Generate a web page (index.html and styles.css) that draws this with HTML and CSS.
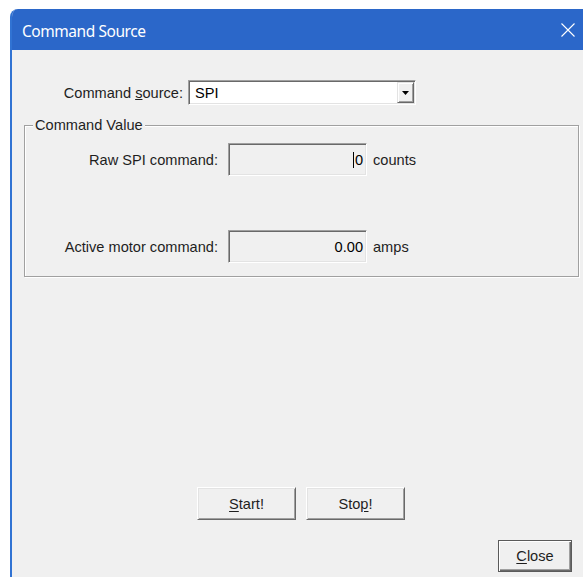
FILE: index.html
```html
<!DOCTYPE html>
<html lang="en">
<head>
<meta charset="utf-8">
<title>Command Source</title>
<link rel="stylesheet" href="styles.css">
</head>
<body>
<div class="window">
  <div class="titlebar">
    <span class="title">Command Source</span>
    <span class="close-x" aria-label="Close">
      <svg width="14" height="14" viewBox="0 0 14 14"><path d="M0.5 0.5 L13.5 13.5 M13.5 0.5 L0.5 13.5" stroke="#ffffff" stroke-width="1.1" fill="none"/></svg>
    </span>
  </div>
  <div class="client">
    <div class="source-row">
      <label class="source-label">Command <u>s</u>ource:</label>
      <div class="combo">
        <span class="combo-text">SPI</span>
        <span class="combo-btn">
          <svg width="7" height="4" viewBox="0 0 7 4"><path d="M0 0 H7 L3.5 4 Z" fill="#000000"/></svg>
        </span>
      </div>
    </div>

    <div class="group">
      <div class="caption">Command Value</div>
      <div class="value-row raw">
        <span class="value-label">Raw SPI command:</span>
        <div class="readout"><span class="caret"></span>0</div>
        <span class="unit">counts</span>
      </div>
      <div class="value-row active">
        <span class="value-label">Active motor command:</span>
        <div class="readout">0.00</div>
        <span class="unit">amps</span>
      </div>
    </div>

    <div class="actions">
      <button class="btn run-btn"><u>S</u>tart!</button>
      <button class="btn run-btn">Sto<u>p</u>!</button>
    </div>

    <div class="footer">
      <button class="btn default-btn"><u>C</u>lose</button>
    </div>
  </div>
</div>
</body>
</html>
```

FILE: styles.css
```css
html, body {
  margin: 0;
  padding: 0;
  background: #ffffff;
}

body {
  width: 583px;
  height: 577px;
  overflow: hidden;
}

.window {
  margin: 9px 0 0 10px;
  width: 581px;
  height: 568px;
  box-sizing: border-box;
  border-left: 2px solid #3173d3;
  border-top-left-radius: 8px;
  border-top-right-radius: 8px;
  overflow: hidden;
  background: #f0f0f0;
  display: flex;
  flex-direction: column;
}

/* ---------- title bar ---------- */
.titlebar {
  height: 41px;
  flex: none;
  background: #2b67c9;
  color: #ffffff;
  display: flex;
  align-items: center;
  font-family: "Noto Sans", "Open Sans", sans-serif;
  font-size: 15.5px;
  letter-spacing: -0.45px;
  margin-left: -2px;
  padding-left: 12px;
}

.title {
  padding-top: 2px;
}

.close-x {
  margin-left: auto;
  margin-right: 16px;
  width: 14px;
  height: 14px;
  display: flex;
}

/* ---------- dialog body ---------- */
.client {
  flex: 1;
  display: flex;
  flex-direction: column;
  font-family: "Liberation Sans", Arial, sans-serif;
  font-size: 14.6px;
  color: #1e1e1e;
}

.source-row {
  margin-top: 30px;
  display: flex;
  align-items: center;
  gap: 5px;
}

.source-label {
  width: 171px;
  text-align: right;
}

.combo {
  width: 228px;
  height: 25px;
  box-sizing: border-box;
  background: #ffffff;
  border-top: 1px solid #a0a0a0;
  border-left: 1px solid #a0a0a0;
  border-bottom: 1px solid #ffffff;
  border-right: 1px solid #ffffff;
  box-shadow: inset 1px 1px 0 #696969, inset -1px -1px 0 #e3e3e3;
  display: flex;
  align-items: center;
  padding: 1px;
}

.combo-text {
  padding-left: 5px;
  color: #000000;
}

.combo-btn {
  margin-left: auto;
  width: 17px;
  height: 21px;
  box-sizing: border-box;
  background: #f0f0f0;
  border-top: 1px solid #e3e3e3;
  border-left: 1px solid #e3e3e3;
  border-bottom: 1px solid #696969;
  border-right: 1px solid #696969;
  box-shadow: inset 1px 1px 0 #ffffff, inset -1px -1px 0 #a0a0a0;
  display: flex;
  align-items: center;
  justify-content: center;
}

/* ---------- group box ---------- */
.group {
  margin: 20px 12px 0 12px;
  height: 152px;
  box-sizing: border-box;
  border: 1px solid #a0a0a0;
  box-shadow: inset 1px 1px 0 #ffffff, 1px 1px 0 #ffffff;
}

.caption {
  margin: -9px 0 0 8px;
  padding: 0 2px;
  width: fit-content;
  line-height: 17px;
  background: #f0f0f0;
}

.value-row {
  display: flex;
  align-items: center;
}

.value-row.raw {
  margin-top: 9px;
}

.value-row.active {
  margin-top: 54px;
}

.value-label {
  width: 193px;
  text-align: right;
  margin-right: 10px;
}

.readout {
  width: 139px;
  height: 33px;
  box-sizing: border-box;
  background: #f0f0f0;
  border-top: 1px solid #a0a0a0;
  border-left: 1px solid #a0a0a0;
  border-bottom: 1px solid #ffffff;
  border-right: 1px solid #ffffff;
  box-shadow: inset 1px 1px 0 #696969, inset -1px -1px 0 #e3e3e3;
  display: flex;
  align-items: center;
  justify-content: flex-end;
  padding-right: 3px;
  color: #000000;
}

.caret {
  width: 1px;
  height: 16px;
  background: #000000;
  margin-right: 1px;
}

.unit {
  margin-left: 6px;
}

/* ---------- buttons ---------- */
.btn {
  font-family: "Liberation Sans", Arial, sans-serif;
  font-size: 14.6px;
  color: #1e1e1e;
  background: #f0f0f0;
  box-sizing: border-box;
  padding: 0;
  border-top: 1px solid #ffffff;
  border-left: 1px solid #ffffff;
  border-bottom: 1px solid #696969;
  border-right: 1px solid #696969;
  box-shadow: inset 1px 1px 0 #e3e3e3, inset -1px -1px 0 #a0a0a0;
}

.btn u {
  text-underline-offset: 2px;
}

.actions {
  margin-top: 210px;
  margin-left: 185px;
  display: flex;
  gap: 10px;
}

.run-btn {
  width: 99px;
  height: 33px;
}

.footer {
  margin-top: 20px;
  display: flex;
  justify-content: flex-end;
  margin-right: 19px;
}

.default-btn {
  width: 74px;
  height: 32px;
  border: 1px solid #5a5a5a;
  box-shadow: inset 1px 1px 0 #ffffff, inset -1px -1px 0 #696969, inset -2px -2px 0 #a0a0a0;
}
```
